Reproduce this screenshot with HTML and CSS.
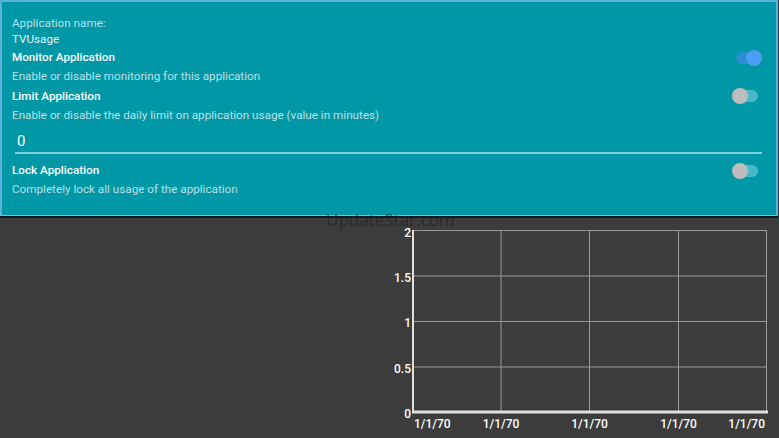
FILE: index.html
```html
<!DOCTYPE html>
<html lang="en">
<head>
    <meta charset="UTF-8">
    <meta name="viewport" content="width=device-width, initial-scale=1.0">
    <title>TVUsage</title>
    <link rel="stylesheet" href="styles.css">
</head>
<body>
    <div class="settings">
        <div class="app-name">
            <div class="label">Application name:</div>
            <div class="value">TVUsage</div>
        </div>

        <div class="row">
            <div class="text">
                <div class="title">Monitor Application</div>
                <div class="desc">Enable or disable monitoring for this application</div>
            </div>
            <div class="switch on"><span class="thumb"></span></div>
        </div>

        <div class="row">
            <div class="text">
                <div class="title">Limit Application</div>
                <div class="desc">Enable or disable the daily limit on application usage (value in minutes)</div>
            </div>
            <div class="switch"><span class="thumb"></span></div>
        </div>

        <div class="limit-input">0</div>

        <div class="row">
            <div class="text">
                <div class="title">Lock Application</div>
                <div class="desc">Completely lock all usage of the application</div>
            </div>
            <div class="switch"><span class="thumb"></span></div>
        </div>
    </div>

    <div class="content">
        <div class="watermark">UpdateStar.com</div>
        <div class="spacer"></div>
        <div class="chart">
            <svg width="390" height="219" viewBox="0 0 390 219">
                <!-- grid -->
                <g stroke="#9a9a9a" stroke-width="1">
                    <line x1="24" y1="12.5" x2="378" y2="12.5"/>
                    <line x1="24" y1="58" x2="378" y2="58"/>
                    <line x1="24" y1="103.5" x2="378" y2="103.5"/>
                    <line x1="24" y1="149" x2="378" y2="149"/>
                    <line x1="112" y1="12" x2="112" y2="194"/>
                    <line x1="200.5" y1="12" x2="200.5" y2="194"/>
                    <line x1="289.5" y1="12" x2="289.5" y2="194"/>
                    <line x1="377.5" y1="12" x2="377.5" y2="194"/>
                </g>
                <!-- axes -->
                <line x1="24" y1="12" x2="24" y2="195" stroke="#e0e0e0" stroke-width="2"/>
                <line x1="23" y1="194" x2="379" y2="194" stroke="#e0e0e0" stroke-width="3"/>
                <!-- y labels -->
                <g class="axis-label" text-anchor="end">
                    <text x="22" y="19">2</text>
                    <text x="22" y="64">1.5</text>
                    <text x="22" y="109">1</text>
                    <text x="22" y="155">0.5</text>
                    <text x="22" y="200">0</text>
                </g>
                <!-- x labels -->
                <g class="axis-label">
                    <text x="25" y="210">1/1/70</text>
                    <text x="112" y="210" text-anchor="middle">1/1/70</text>
                    <text x="200.5" y="210" text-anchor="middle">1/1/70</text>
                    <text x="289.5" y="210" text-anchor="middle">1/1/70</text>
                    <text x="376" y="210" text-anchor="end">1/1/70</text>
                </g>
            </svg>
        </div>
    </div>
</body>
</html>
```

FILE: styles.css
```css
body {
    margin: 0;
    background-color: #3c3c3c;
    font-family: Roboto, "Noto Sans", sans-serif;
    width: 779px;
    height: 438px;
    overflow: hidden;
}
.settings {
    width: 774px;
    height: 213px;
    background-color: #0097a7;
    border: 2px solid #5bb0dc;
    border-bottom: 1px solid #6cc3e0;
    box-shadow: 0 2px 0 #101820;
}
.app-name {
    padding: 13px 0 0 10px;
    margin-bottom: 1px;
    font-size: 11.7px;
    line-height: 16px;
}
.app-name .label {
    color: #b9e0e6;
}
.app-name .value {
    color: #e4f3f5;
}
.row {
    display: flex;
    align-items: center;
    justify-content: space-between;
    padding-left: 10px;
}
.title {
    color: #ffffff;
    font-size: 11.7px;
    font-weight: 500;
    line-height: 19.3px;
}
.desc {
    color: #b9e0e6;
    font-size: 11.7px;
    line-height: 19.3px;
}
.switch {
    position: relative;
    width: 22px;
    height: 12px;
    margin-right: 18px;
    margin-top: -19px;
    border-radius: 6px;
    background-color: #47b9c4;
}
.switch .thumb {
    position: absolute;
    top: -2px;
    left: -4px;
    width: 16px;
    height: 16px;
    border-radius: 50%;
    background-color: #bdbdbd;
}
.switch.on {
    background-color: #2b8ed0;
}
.switch.on .thumb {
    left: auto;
    right: -4px;
    background-color: #4d9ff6;
}
.limit-input {
    margin: 6px 14px 7px 13px;
    padding: 0 0 1px 2px;
    color: #ffffff;
    font-size: 15px;
    line-height: 20px;
    border-bottom: 2px solid #7ad2da;
}
.content {
    position: relative;
    display: flex;
    margin-top: 2px;
}
.spacer {
    flex: 1;
}
.chart {
    width: 390px;
    height: 219px;
}
.chart svg {
    display: block;
}
.axis-label {
    fill: #ffffff;
    font-size: 12px;
    font-weight: 500;
    font-family: Roboto, sans-serif;
}
.watermark {
    position: absolute;
    left: 326px;
    top: -10px;
    color: rgba(20, 30, 30, 0.6);
    font-size: 17px;
    font-family: "Open Sans", Roboto, sans-serif;
}
```
